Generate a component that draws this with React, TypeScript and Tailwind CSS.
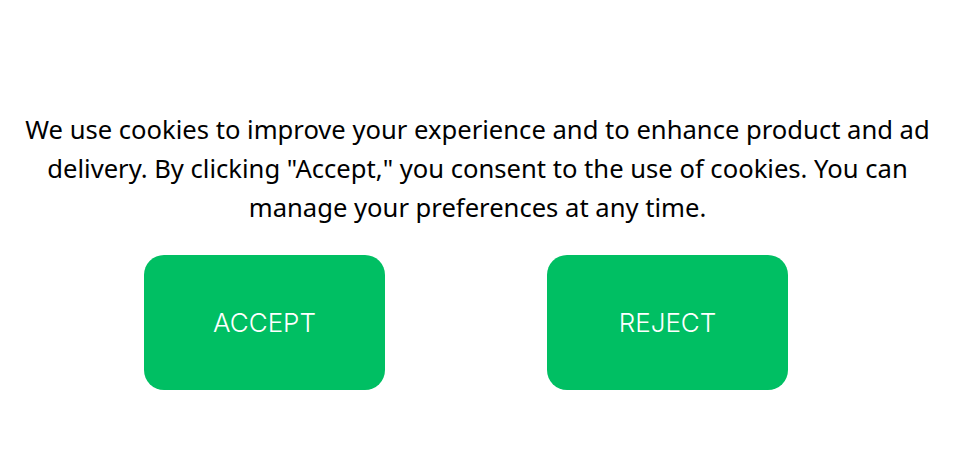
export default function App() {
  return (
    <div className="w-[955px] h-[453px] bg-white flex flex-col">
      <p className="mt-[110px] mx-auto w-[950px] text-center text-[25.6px] leading-[39px] text-black font-['Noto_Sans',sans-serif]">
        We use cookies to improve your experience and to enhance product and ad
        <br />
        delivery. By clicking "Accept," you consent to the use of cookies. You can
        <br />
        manage your preferences at any time.
      </p>
      <div className="mt-[28px] flex pl-[144px] gap-[162px] font-['Inter',sans-serif]">
        <button className="w-[241px] h-[135px] rounded-[20px] bg-[#00bf63] text-white text-[26px] font-light flex items-center justify-center">
          ACCEPT
        </button>
        <button className="w-[241px] h-[135px] rounded-[20px] bg-[#00bf63] text-white text-[26px] font-light flex items-center justify-center">
          REJECT
        </button>
      </div>
    </div>
  )
}
